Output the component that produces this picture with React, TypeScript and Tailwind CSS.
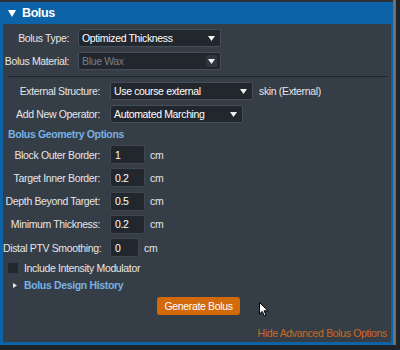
import React from 'react';

const font = { fontFamily: '"Liberation Sans", Arial, sans-serif' };

const Arrow = () => (
  <svg width="7" height="5" viewBox="0 0 7 5">
    <path d="M0 0 H7 L3.5 5 Z" fill="#f2f2f2" />
  </svg>
);

const Select = ({
  value,
  width,
  disabled,
}: {
  value: string;
  width: string;
  disabled?: boolean;
}) => (
  <div
    className={`flex h-[18px] items-center justify-between rounded-[2px] border border-[#464d56] bg-[#22272d] pl-[3px] pr-[3px] ${width}`}
  >
    <span className={disabled ? 'text-[#787e86]' : 'text-white'}>{value}</span>
    {disabled ? (
      <span className="flex h-[12px] w-[11px] items-center justify-center rounded-[2px] bg-[#30363d]">
        <Arrow />
      </span>
    ) : (
      <span className="flex w-[11px] justify-center">
        <Arrow />
      </span>
    )}
  </div>
);

const NumRow = ({
  label,
  value,
  width = 'w-[35px]',
}: {
  label: string;
  value: string;
  width?: string;
}) => (
  <div className="flex h-[19px] items-center">
    <span className="w-[97px] whitespace-nowrap text-right">{label}</span>
    <div
      className={`ml-[10px] flex h-[19px] items-center rounded-[2px] border border-[#3f464f] bg-[#22272d] pl-[4px] text-white ${width}`}
    >
      {value}
    </div>
    <span className="ml-[5px]">cm</span>
  </div>
);

export default function App() {
  return (
    <div
      className="relative flex h-[350px] w-[400px] overflow-hidden bg-[#1f2226] text-[10.5px] leading-[12px] tracking-[-0.35px] text-[#e6e6e6]"
      style={font}
    >
      <div className="flex h-[345px] w-[393px] flex-col">
        <div className="h-[2px] bg-[#2c3138]" />
        <div className="flex flex-1 flex-col border-b-[3px] border-l-[3px] border-r-[2px] border-[#0c63a7] bg-[#353d47]">
          {/* header */}
          <div className="-ml-[3px] -mr-[2px] flex h-[22px] items-center bg-[#0c63a7] pl-[8px] text-[12.5px] font-bold tracking-[-0.4px] text-white">
            <svg width="8" height="7" viewBox="0 0 8 7" className="mr-[6px]">
              <path d="M0 0 H8 L4 7 Z" fill="#ffffff" />
            </svg>
            <span>Bolus</span>
          </div>

          <div className="flex flex-col pt-[5px]">
            <div className="flex items-center">
              <span className="w-[66px] whitespace-nowrap text-right">Bolus Type:</span>
              <div className="ml-[9px]">
                <Select value="Optimized Thickness" width="w-[143px]" />
              </div>
            </div>
            <div className="mt-[5px] flex items-center">
              <span className="w-[66px] whitespace-nowrap text-right">Bolus Material:</span>
              <div className="ml-[9px]">
                <Select value="Blue Wax" width="w-[143px]" disabled />
              </div>
            </div>

            <div className="ml-[5px] mr-[3px] mt-[6px] h-[1px] bg-[#22272d]" />

            <div className="mt-[5px] flex items-center">
              <span className="w-[97px] whitespace-nowrap text-right">External Structure:</span>
              <div className="ml-[10px]">
                <Select value="Use course external" width="w-[143px]" />
              </div>
              <span className="ml-[6px]">skin (External)</span>
            </div>
            <div className="mt-[5px] flex items-center">
              <span className="w-[97px] whitespace-nowrap text-right">Add New Operator:</span>
              <div className="ml-[10px]">
                <Select value="Automated Marching" width="w-[133px]" />
              </div>
            </div>

            <div className="ml-[5px] mt-[4px] h-[14px] font-bold leading-[14px] text-[#78b1e3]">
              Bolus Geometry Options
            </div>

            <div className="mt-[4px] flex flex-col gap-[4.25px]">
              <NumRow label="Block Outer Border:" value="1" />
              <NumRow label="Target Inner Border:" value="0.2" />
              <NumRow label="Depth Beyond Target:" value="0.5" />
              <NumRow label="Minimum Thickness:" value="0.2" />
              <NumRow label="Distal PTV Smoothing:" value="0" width="w-[29px]" />
            </div>

            <div className="mt-[6px] flex h-[10px] items-center pl-[5px]">
              <div className="h-[10px] w-[10px] rounded-[1px] bg-[#22272d]" />
              <span className="ml-[6px]">Include Intensity Modulator</span>
            </div>

            <div className="mt-[5px] flex h-[14px] items-center pl-[10px]">
              <svg width="4" height="5" viewBox="0 0 4 5">
                <path d="M0 0 L4 2.5 L0 5 Z" fill="#e6e6e6" />
              </svg>
              <span className="ml-[7px] font-bold text-[#78b1e3]">Bolus Design History</span>
            </div>

            <div className="mt-[5px] flex justify-center pl-[3px]">
              <div className="flex h-[18px] w-[83px] items-center justify-center rounded-[3px] bg-[#d2690b] text-white">
                Generate Bolus
              </div>
            </div>

            <div className="mr-[4px] mt-[12px] text-right text-[#cc6a1f]">
              Hide Advanced Bolus Options
            </div>
          </div>
        </div>
      </div>
      <div className="h-[345px] w-[3px] bg-[#6a7078]" />

      <svg
        className="absolute left-[259px] top-[302px]"
        width="10"
        height="15"
        viewBox="0 0 10 15"
      >
        <path
          d="M0.5 0.5 L0.5 12 L3.3 9.4 L5.3 14 L7 13.2 L5.1 8.8 L9 8.8 Z"
          fill="#ffffff"
          stroke="#000000"
          strokeWidth="1"
          strokeLinejoin="round"
        />
      </svg>
    </div>
  );
}
